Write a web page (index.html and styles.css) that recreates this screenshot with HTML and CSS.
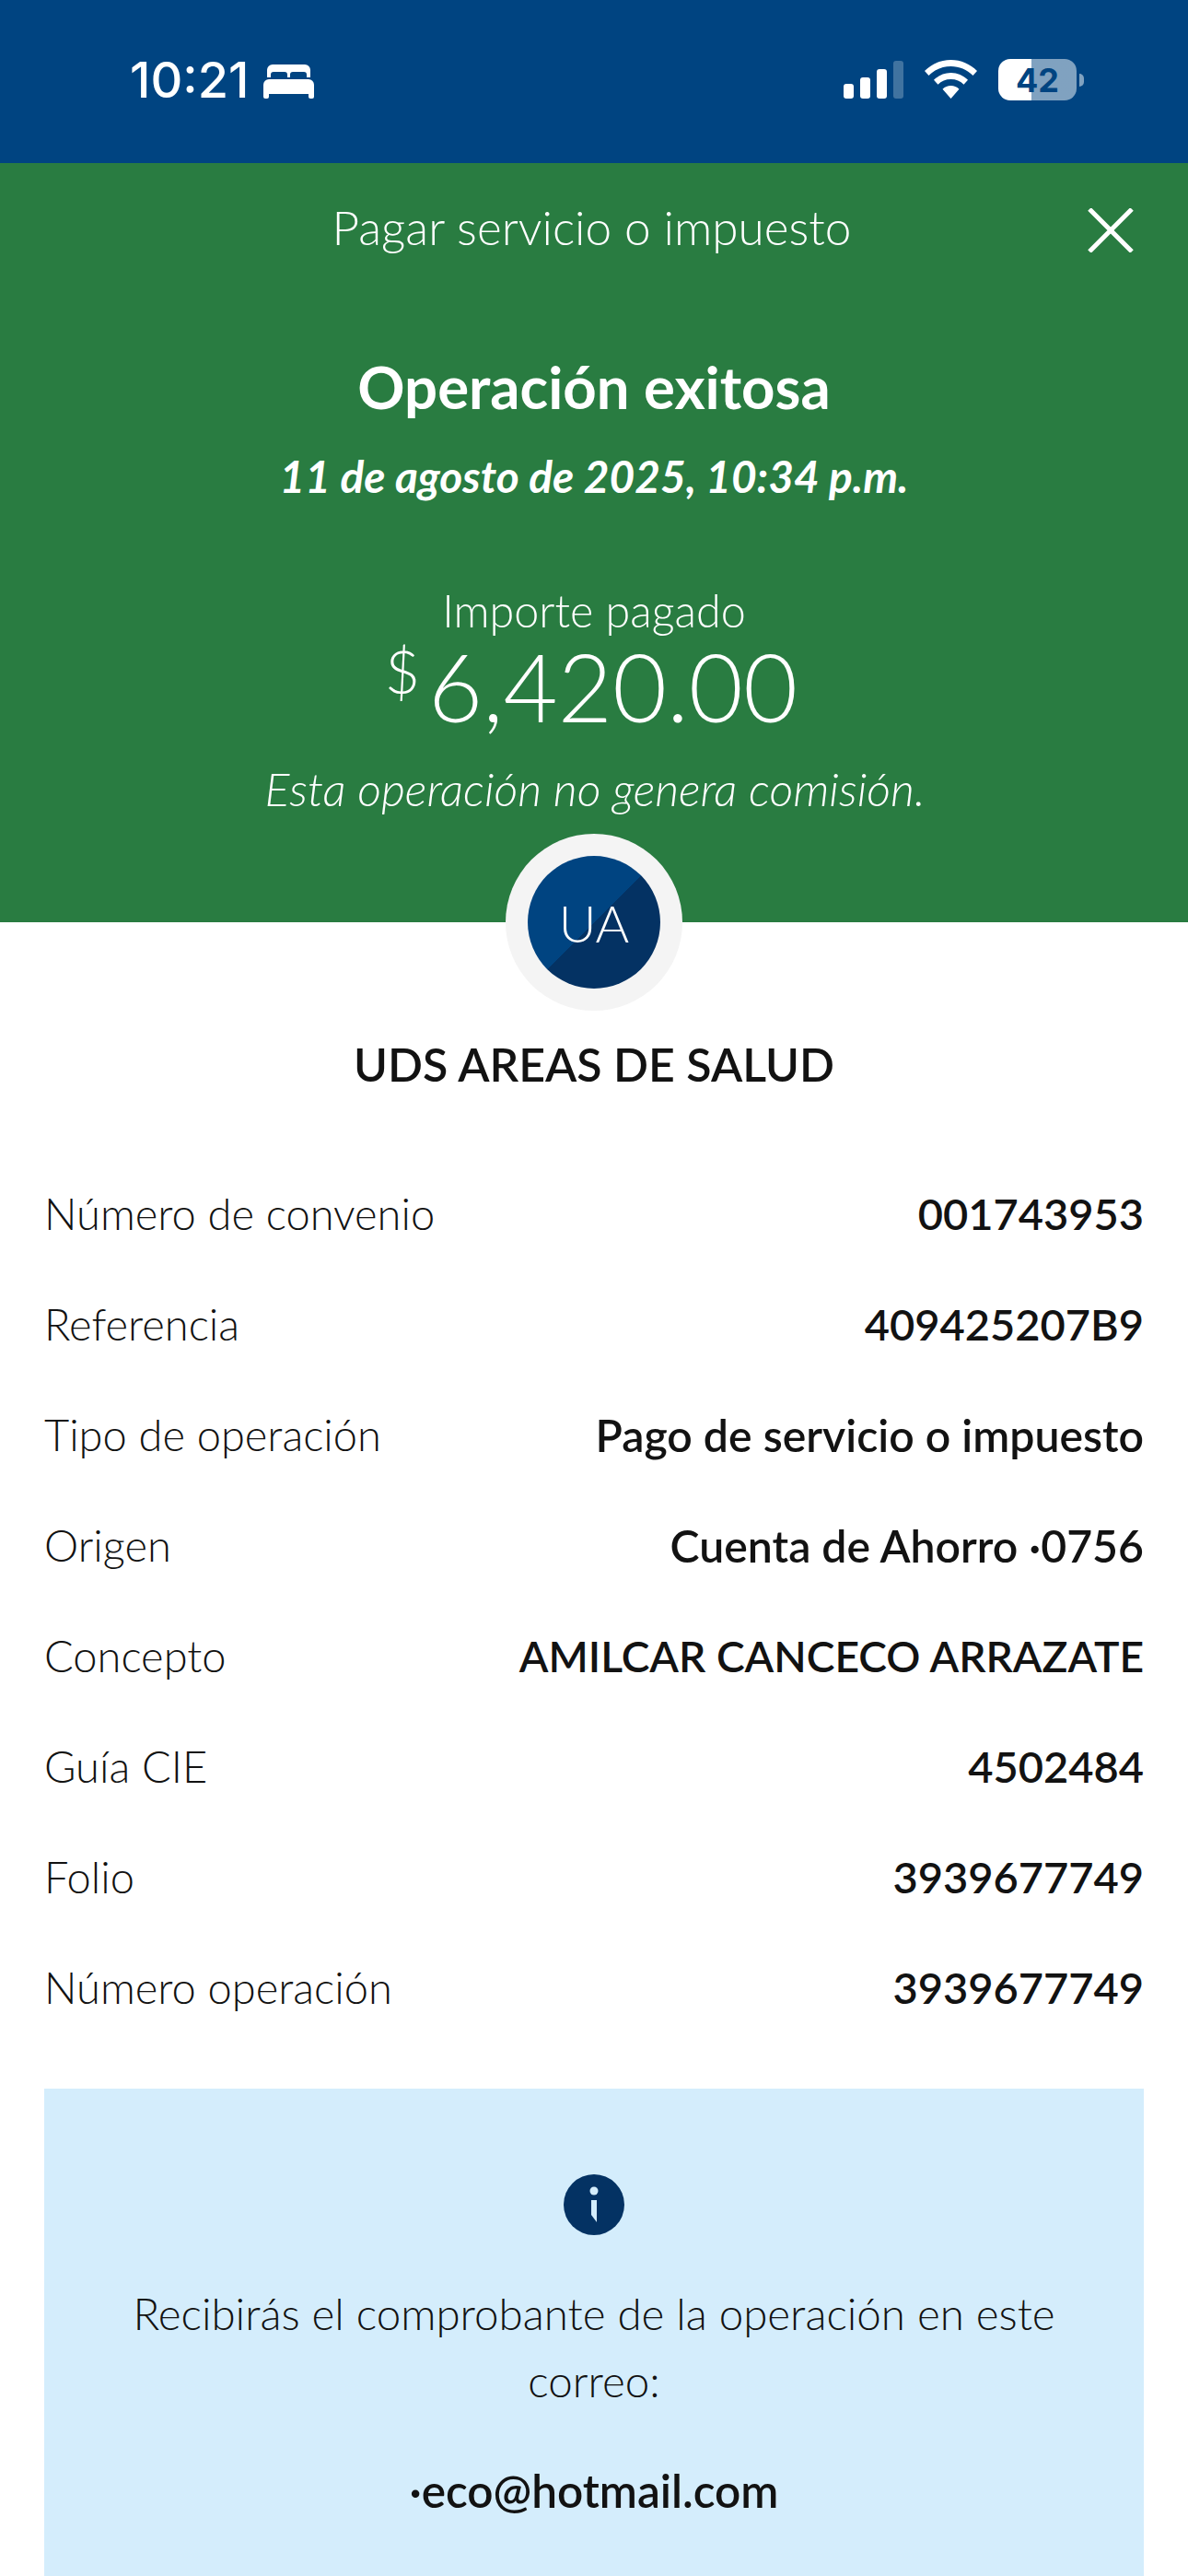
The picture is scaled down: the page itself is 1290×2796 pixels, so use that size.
FILE: index.html
```html
<!DOCTYPE html>
<html lang="es">
<head>
<meta charset="utf-8">
<title>Operación exitosa</title>
<link rel="stylesheet" href="styles.css">
</head>
<body>
<div class="screen">
  <div class="status">
    <div class="status-left">
      <span class="time">10:21</span>
      <svg class="bed" viewBox="0 0 55 37" width="55" height="37"><path fill="#fff" fill-rule="evenodd" d="M10 0H45a6 6 0 0 1 6 6V14H47V11a3 3 0 0 0-3-3H32a3 3 0 0 0-3 3V14H26V11a3 3 0 0 0-3-3H11a3 3 0 0 0-3 3V14H4V6a6 6 0 0 1 6-6ZM6 16H49a6 6 0 0 1 6 6V35a2 2 0 0 1-2 2H51a2 2 0 0 1-2-2V32H6V35a2 2 0 0 1-2 2H2a2 2 0 0 1-2-2V22a6 6 0 0 1 6-6Z"/></svg>
    </div>
    <div class="status-right">
      <svg class="signal" viewBox="0 0 65 41" width="65" height="41"><rect x="0" y="25" width="11" height="16" rx="3" fill="#fff"/><rect x="18" y="18" width="11" height="23" rx="3" fill="#fff"/><rect x="36" y="9" width="11" height="32" rx="3" fill="#fff"/><rect x="54" y="0" width="11" height="41" rx="3" fill="#fff" opacity=".25"/></svg>
      <svg class="wifi" viewBox="0 0 57 42" width="57" height="42"><path fill="#fff" d="M28.500 0C39.500 0 49.500 4.500 57 12L52.500 17C46 10.500 37.500 7 28.500 7S11 10.500 4.500 17L0 12C7.500 4.500 17.500 0 28.500 0ZM28.500 14C35.500 14 42 16.800 47 21.800L42.500 26.800C39 23 34 21 28.500 21S18 23 14.500 26.800L10 21.800C15 16.800 21.500 14 28.500 14ZM28.500 28C32 28 35 29.300 37.500 31.700L28.500 42L19.500 31.700C22 29.300 25 28 28.500 28Z"/></svg>
      <div class="battery">
        <div class="battery-body"><span class="battery-level">42</span></div>
        <span class="battery-cap"></span>
      </div>
    </div>
  </div>

  <header class="hero">
    <div class="hero-top">
      <h1 class="hero-title">Pagar servicio o impuesto</h1>
      <svg class="close" viewBox="0 0 50 48" width="50" height="48"><path d="M2 1 48 47M48 1 2 47" stroke="#fff" stroke-width="5" fill="none"/></svg>
    </div>
    <h2 class="result">Operación exitosa</h2>
    <p class="date">11 de agosto de 2025, 10:34 p.m.</p>
    <p class="paid-label">Importe pagado</p>
    <p class="amount"><span class="currency">$</span>6,420.00</p>
    <p class="note">Esta operación no genera comisión.</p>
  </header>

  <main class="content">
    <div class="avatar-ring"><div class="avatar">UA</div></div>
    <h3 class="payee">UDS AREAS DE SALUD</h3>
    <dl class="details">
      <div class="row"><dt>Número de convenio</dt><dd>001743953</dd></div>
      <div class="row"><dt>Referencia</dt><dd>409425207B9</dd></div>
      <div class="row"><dt>Tipo de operación</dt><dd class="words">Pago de servicio o impuesto</dd></div>
      <div class="row"><dt>Origen</dt><dd class="words">Cuenta de Ahorro ·0756</dd></div>
      <div class="row"><dt>Concepto</dt><dd class="caps">AMILCAR CANCECO ARRAZATE</dd></div>
      <div class="row"><dt>Guía CIE</dt><dd>4502484</dd></div>
      <div class="row"><dt>Folio</dt><dd>3939677749</dd></div>
      <div class="row"><dt>Número operación</dt><dd>3939677749</dd></div>
    </dl>
    <section class="notice">
      <svg class="info" viewBox="0 0 66 66" width="66" height="66"><circle cx="33" cy="33" r="33" fill="#043263"/><circle cx="33" cy="18" r="4.500" fill="#d4edfc"/><path fill="#d4edfc" d="M30 28H36V52L30 44Z"/></svg>
      <p class="notice-text">Recibirás el comprobante de la operación en este correo:</p>
      <p class="email">·eco@hotmail.com</p>
    </section>
  </main>
</div>
</body>
</html>
```

FILE: styles.css
```css
* { box-sizing: border-box; }
html, body { margin: 0; padding: 0; }
body { font-family: "Lato", "Liberation Sans", sans-serif; color: #121212; background: #fff; }
p, h1, h2, h3, dl, dd { margin: 0; }
.screen { width: 1290px; height: 2796px; overflow: hidden; background: #fff; }

.status { height: 177px; background: #004481; display: flex; justify-content: space-between; padding: 65px 113px 0 141px; }
.status-left { display: flex; align-items: flex-start; gap: 16px; }
.time { font-family: "Inter", sans-serif; font-weight: 500; font-size: 54px; line-height: 44px; color: #fff; }
.bed { margin-top: 5px; }
.status-right { display: flex; align-items: flex-start; }
.signal { margin-top: 1px; }
.wifi { margin: 0 0 0 23px; }
.battery { display: flex; align-items: center; margin-left: 23px; margin-top: -1px; }
.battery-body { width: 85px; height: 45px; border-radius: 13px; background: linear-gradient(90deg, #fff 0 36px, rgba(255,255,255,.5) 36px); display: flex; align-items: center; justify-content: center; }
.battery-level { font-family: "Inter", sans-serif; font-weight: 700; font-size: 36px; line-height: 1; color: #004481; }
.battery-cap { width: 5px; height: 14px; margin-left: 3px; border-radius: 0 5px 5px 0; background: rgba(255,255,255,.5); }

.hero { height: 824px; background: #297c41; color: #fff; text-align: center; display: flex; flex-direction: column; align-items: center; padding-top: 35px; }
.hero-top { width: 100%; height: 68px; position: relative; }
.hero-title { font-weight: 300; font-size: 51.300px; line-height: 68px; padding-right: 5px; }
.close { position: absolute; top: 14px; right: 59px; }
.result { margin-top: 102px; font-weight: 700; font-size: 63.500px; line-height: 76px; }
.date { margin-top: 31px; font-weight: 700; font-style: italic; font-size: 47.800px; line-height: 56px; }
.paid-label { margin-top: 89px; font-weight: 300; font-size: 48.500px; line-height: 56px; }
.amount { margin-top: 5px; padding-right: 6px; font-weight: 300; font-size: 102px; line-height: 100px; display: flex; align-items: flex-start; }
.currency { font-size: 66px; line-height: 66px; margin-right: 9px; }
.note { margin-top: 33px; padding-left: 2px; font-weight: 300; font-style: italic; font-size: 50.200px; line-height: 56px; }

.content { display: flex; flex-direction: column; align-items: center; padding: 0 48px; }
.avatar-ring { width: 192px; height: 192px; margin-top: -96px; border-radius: 50%; background: #f4f4f4; display: flex; align-items: center; justify-content: center; }
.avatar { width: 144px; height: 144px; border-radius: 50%; background: linear-gradient(135deg, #004481 50%, #043263 50%); color: #fff; font-weight: 300; font-size: 56px; display: flex; align-items: center; justify-content: center; }
.payee { margin-top: 28px; font-weight: 600; font-size: 50px; line-height: 60px; }

.details { width: 100%; margin-top: 72px; }
.row { height: 120px; display: flex; align-items: center; justify-content: space-between; }
.row dt { font-weight: 300; font-size: 47px; }
.row dd { font-weight: 600; font-size: 47px; }
.row dd.words { font-size: 48.200px; }
.row dd.caps { font-size: 46.200px; }

.notice { width: 100%; margin-top: 50px; padding-top: 93px; background: #d4edfc; display: flex; flex-direction: column; align-items: center; text-align: center; height: 600px; }
.notice-text { margin-top: 48px; width: 1060px; font-weight: 300; font-size: 47.500px; line-height: 73px; }
.email { margin-top: 53px; font-weight: 600; font-size: 49.500px; line-height: 60px; }
```
